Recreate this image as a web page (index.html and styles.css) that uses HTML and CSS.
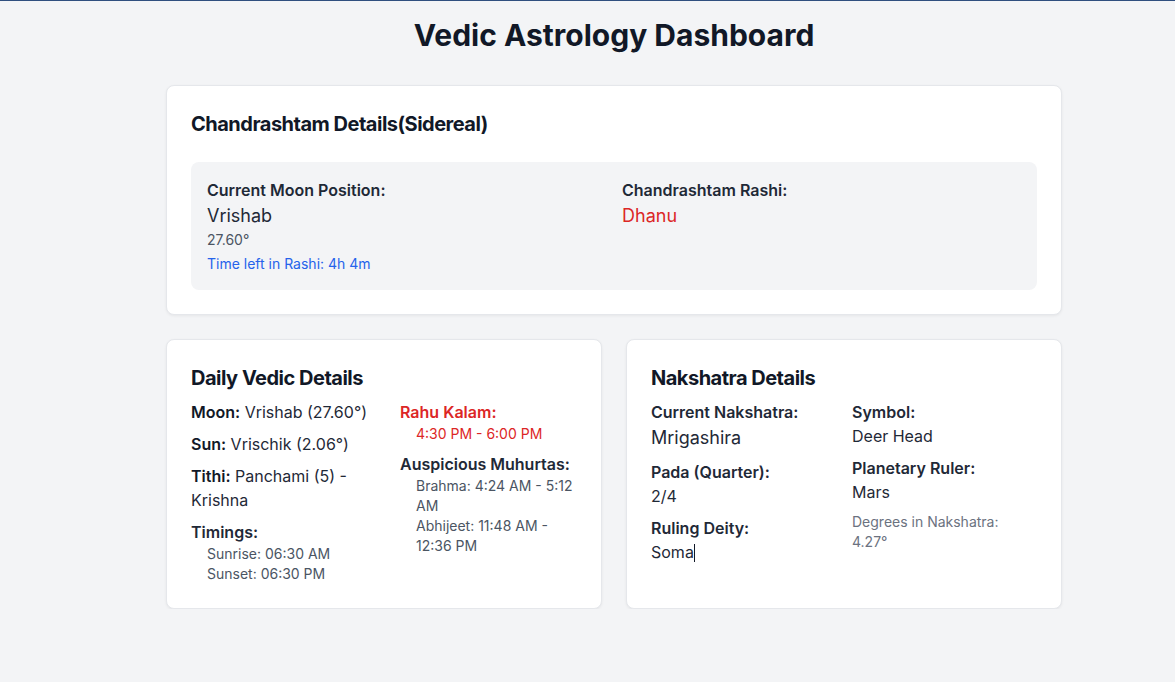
FILE: index.html
```html
<!DOCTYPE html>
<html lang="en">
<head>
<meta charset="utf-8">
<title>Vedic Astrology Dashboard</title>
<link rel="stylesheet" href="styles.css">
</head>
<body>
<div class="topline"></div>
<main class="page">
  <h1 class="page-title">Vedic Astrology Dashboard</h1>

  <section class="card">
    <h2 class="card-title card-title-lg">Chandrashtam Details(Sidereal)</h2>
    <div class="moon-box">
      <div class="moon-col">
        <div class="label">Current Moon Position:</div>
        <div class="value-lg">Vrishab</div>
        <div class="small muted">27.60°</div>
        <div class="small blue time-left">Time left in Rashi: 4h 4m</div>
      </div>
      <div class="moon-col">
        <div class="label">Chandrashtam Rashi:</div>
        <div class="value-lg red">Dhanu</div>
      </div>
    </div>
  </section>

  <div class="row">
    <section class="card">
      <h2 class="card-title">Daily Vedic Details</h2>
      <div class="daily-grid">
        <div class="col">
          <p class="item"><b>Moon:</b> Vrishab (27.60°)</p>
          <p class="item"><b>Sun:</b> Vrischik (2.06°)</p>
          <p class="item"><b>Tithi:</b> Panchami (5) - Krishna</p>
          <div class="item">
            <div class="label">Timings:</div>
            <div class="sub">Sunrise: 06:30 AM</div>
            <div class="sub">Sunset: 06:30 PM</div>
          </div>
        </div>
        <div class="col">
          <div class="item">
            <div class="label red">Rahu Kalam:</div>
            <div class="sub red">4:30 PM - 6:00 PM</div>
          </div>
          <div class="item">
            <div class="label">Auspicious Muhurtas:</div>
            <div class="sub">Brahma: 4:24 AM - 5:12 AM</div>
            <div class="sub">Abhijeet: 11:48 AM - 12:36 PM</div>
          </div>
        </div>
      </div>
    </section>

    <section class="card">
      <h2 class="card-title">Nakshatra Details</h2>
      <div class="nak-grid">
        <div class="col">
          <div class="item">
            <div class="label">Current Nakshatra:</div>
            <div class="value-lg">Mrigashira</div>
          </div>
          <div class="item">
            <div class="label">Pada (Quarter):</div>
            <div class="value">2/4</div>
          </div>
          <div class="item">
            <div class="label">Ruling Deity:</div>
            <div class="value">Soma<span class="caret"></span></div>
          </div>
        </div>
        <div class="col">
          <div class="item">
            <div class="label">Symbol:</div>
            <div class="value">Deer Head</div>
          </div>
          <div class="item">
            <div class="label">Planetary Ruler:</div>
            <div class="value">Mars</div>
          </div>
          <div class="item">
            <div class="small gray">Degrees in Nakshatra: 4.27°</div>
          </div>
        </div>
      </div>
    </section>
  </div>
</main>
</body>
</html>
```

FILE: styles.css
```css
* { box-sizing: border-box; }
html, body {
  margin: 0;
  padding: 0;
  background: #f3f4f6;
  font-family: Inter, "Noto Sans", "Liberation Sans", sans-serif;
  color: #111827;
}
.topline {
  height: 1px;
  background: #2f4f7f;
}
.page {
  width: 896px;
  margin-left: 166px;
  padding-top: 16px;
}
.page-title {
  margin: 0 0 32px;
  font-size: 30px;
  line-height: 36px;
  font-weight: 700;
  text-align: center;
  color: #111827;
}
.card {
  background: #fff;
  border: 1px solid #e5e7eb;
  border-radius: 8px;
  box-shadow: 0 1px 3px rgba(0,0,0,0.06);
  padding: 24px;
}
.card-title {
  margin: 0 0 8px;
  font-size: 20px;
  line-height: 28px;
  font-weight: 700;
  letter-spacing: -0.025em;
  color: #111827;
}
.card-title-lg { margin-bottom: 24px; }
.moon-box {
  background: #f3f4f6;
  border-radius: 8px;
  padding: 16px;
  display: grid;
  grid-template-columns: 1fr 1fr;
  gap: 16px;
}
.label {
  font-size: 16px;
  line-height: 24px;
  font-weight: 600;
  color: #1f2937;
}
.value-lg {
  font-size: 18px;
  line-height: 28px;
  color: #1f2937;
}
.value {
  font-size: 16px;
  line-height: 24px;
  color: #1f2937;
}
.small {
  font-size: 14px;
  line-height: 20px;
}
.muted { color: #4b5563; }
.gray { color: #6b7280; }
.blue { color: #2563eb; }
.red { color: #dc2626; }
.time-left { margin-top: 4px; }
.row {
  display: grid;
  grid-template-columns: 1fr 1fr;
  gap: 24px;
  margin-top: 24px;
}
.daily-grid {
  display: grid;
  grid-template-columns: 1fr 1fr;
  gap: 32px;
}
.nak-grid {
  display: grid;
  grid-template-columns: 1fr 1fr;
  gap: 16px;
}
.col { display: flex; flex-direction: column; gap: 8px; }
.item {
  margin: 0;
  font-size: 16px;
  line-height: 24px;
  color: #1f2937;
}
.item b { font-weight: 600; color: #111827; }
.sub {
  font-size: 14px;
  line-height: 20px;
  padding-left: 16px;
  color: #4b5563;
}
.sub.red { color: #dc2626; }
.caret {
  display: inline-block;
  width: 1px;
  height: 18px;
  background: #111827;
  vertical-align: -4px;
}
```
